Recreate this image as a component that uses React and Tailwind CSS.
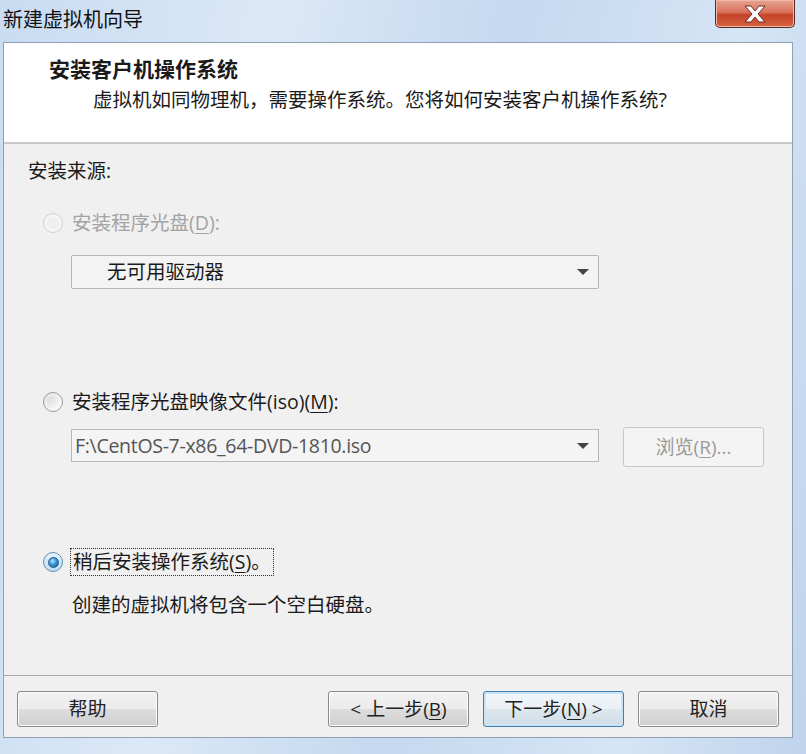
import React from "react";

const font = "font-['Open_Sans','Noto_Sans_CJK_SC',sans-serif]";

const U = ({ children }) => <span className="underline underline-offset-[3px] decoration-1">{children}</span>;

const Radio = ({ checked, disabled }) => (
    <span
        className={`flex h-[20px] w-[20px] shrink-0 items-center justify-center rounded-full border ${
            disabled
                ? "border-[#d0d0d0] bg-[#f4f4f4]"
                : checked
                ? "border-[#5b8fbf] bg-[linear-gradient(180deg,#e6f2fb,#c3ddf1)]"
                : "border-[#9a9a9a] bg-[linear-gradient(135deg,#e2e2e2,#ffffff)]"
        }`}
    >
        {checked && (
            <span className="h-[11px] w-[11px] rounded-full border border-[#1b5a8c] bg-[radial-gradient(circle_at_40%_35%,#b9e3ff_0%,#3a96d8_45%,#0d4f8a_100%)]" />
        )}
        {!checked && !disabled && <span className="h-[12px] w-[12px] rounded-full bg-[linear-gradient(135deg,#dadada,#f8f8f8)]" />}
        {disabled && <span className="h-[12px] w-[12px] rounded-full bg-[#efefef]" />}
    </span>
);

const Arrow = () => (
    <svg width="14" height="8" viewBox="0 0 14 8">
        <path d="M1 1 L13 1 L7 7 Z" fill="#444" />
    </svg>
);

const Button = ({ children, primary, disabled, className = "" }) => (
    <div
        className={`flex h-[36px] w-[141px] items-center justify-center rounded-[3px] border text-[19px] ${
            primary
                ? "border-[#3c7fb1] shadow-[inset_0_0_0_2px_#c9e4f4] bg-[linear-gradient(180deg,#f1f6fa_0%,#e9f0f5_50%,#dde7ee_51%,#d2dde5_100%)] text-[#222]"
                : disabled
                ? "border-[#c7c7c7] bg-[#f4f4f4] text-[#9a9a9a]"
                : "border-[#8a8a8a] shadow-[inset_0_0_0_1px_#fcfcfc] bg-[linear-gradient(180deg,#f2f2f2_0%,#ebebeb_50%,#dddddd_51%,#cfcfcf_100%)] text-[#222]"
        } ${className}`}
    >
        {children}
    </div>
);

const CloseIcon = () => (
    <svg width="26" height="18" viewBox="0 0 26 18">
        <path
            d="M3 1 L9 1 L13 6 L17 1 L23 1 L16 9 L23 17 L17 17 L13 12 L9 17 L3 17 L10 9 Z"
            fill="#ffffff"
            stroke="#6b2a22"
            strokeWidth="1"
            strokeLinejoin="round"
        />
    </svg>
);

export default function App() {
    return (
        <div className={`${font} relative h-[754px] w-[806px] overflow-hidden bg-[linear-gradient(100deg,#c9dcf2_0%,#dbe8f7_30%,#c4d8ef_55%,#d6e5f6_80%,#bfd3ec_100%)] text-[#1a1a1a]`}>
            {/* title bar */}
            <div className="flex h-[42px] items-start justify-between pl-[3px] pr-[11px]">
                <span className="mt-[7px] text-[20px] leading-[26px] text-[#111]">新建虚拟机向导</span>
                <div className="flex h-[28px] w-[80px] items-center justify-center rounded-b-[5px] border border-t-0 border-[#5d2a24] bg-[linear-gradient(180deg,#e8a493_0%,#d9735c_45%,#c4432a_55%,#d5633f_100%)] shadow-[inset_0_0_0_1px_#f0b9a9]">
                    <CloseIcon />
                </div>
            </div>

            {/* client area */}
            <div className="ml-[3px] flex h-[696px] w-[790px] flex-col border border-[#8f9fb4] bg-[#f0f0f0]">
                {/* header */}
                <div className="h-[101px] shrink-0 border-b-2 border-b-[#c9c9c9] bg-white pl-[45px] pt-[12px]">
                    <div className="text-[21px] font-bold leading-[28px]">安装客户机操作系统</div>
                    <div className="mt-[4px] pl-[44px] text-[19.5px] leading-[26px]">
                        虚拟机如同物理机，需要操作系统。您将如何安装客户机操作系统?
                    </div>
                </div>

                {/* body */}
                <div className="flex flex-1 flex-col pl-[24px] pt-[14px]">
                    <div className="text-[19.5px] leading-[26px]">安装来源:</div>

                    <div className="mt-[26px] flex h-[26px] items-center gap-[9px] pl-[15px] text-[19.5px] text-[#a3a3a3]">
                        <Radio disabled />
                        <span>
                            安装程序光盘(<U>D</U>):
                        </span>
                    </div>
                    <div className="ml-[43px] mt-[19px] flex h-[34px] w-[528px] items-center justify-between rounded-[2px] border border-[#b5b5b5] bg-[#f3f3f3] pl-[35px] pr-[8px] text-[19.5px]">
                        <span>无可用驱动器</span>
                        <Arrow />
                    </div>

                    <div className="mt-[100px] flex h-[26px] items-center gap-[9px] pl-[15px] text-[19.5px]">
                        <Radio />
                        <span>
                            安装程序光盘映像文件(iso)(<U>M</U>):
                        </span>
                    </div>
                    <div className="ml-[43px] mt-[12px] flex items-start gap-[24px]">
                        <div className="mt-[2px] flex h-[33px] w-[528px] items-center justify-between border border-[#b8b8b8] bg-[#f4f4f4] pl-[3px] pr-[8px] text-[19.5px] text-[#555]">
                            <span className="font-['Open_Sans',sans-serif] tracking-[-0.3px]">F:\CentOS-7-x86_64-DVD-1810.iso</span>
                            <Arrow />
                        </div>
                        <Button disabled className="h-[40px]">
                            浏览(<U>R</U>)...
                        </Button>
                    </div>

                    <div className="mt-[81px] flex h-[28px] items-center gap-[7px] pl-[15px] text-[19.5px]">
                        <Radio checked />
                        <span className="border border-dotted border-[#333] px-[2px] leading-[26px]">
                            稍后安装操作系统(<U>S</U>)。
                        </span>
                    </div>
                    <div className="ml-[44px] mt-[16px] text-[19.5px] leading-[26px]">创建的虚拟机将包含一个空白硬盘。</div>
                </div>

                {/* footer */}
                <div className="flex h-[62px] shrink-0 items-start justify-between border-t border-t-[#a9a9a9] px-[13px] pt-[15px]">
                    <Button>帮助</Button>
                    <div className="flex gap-[14px]">
                        <Button>
                            &lt; 上一步(<U>B</U>)
                        </Button>
                        <Button primary>
                            下一步(<U>N</U>) &gt;
                        </Button>
                        <Button>取消</Button>
                    </div>
                </div>
            </div>
        </div>
    );
}
